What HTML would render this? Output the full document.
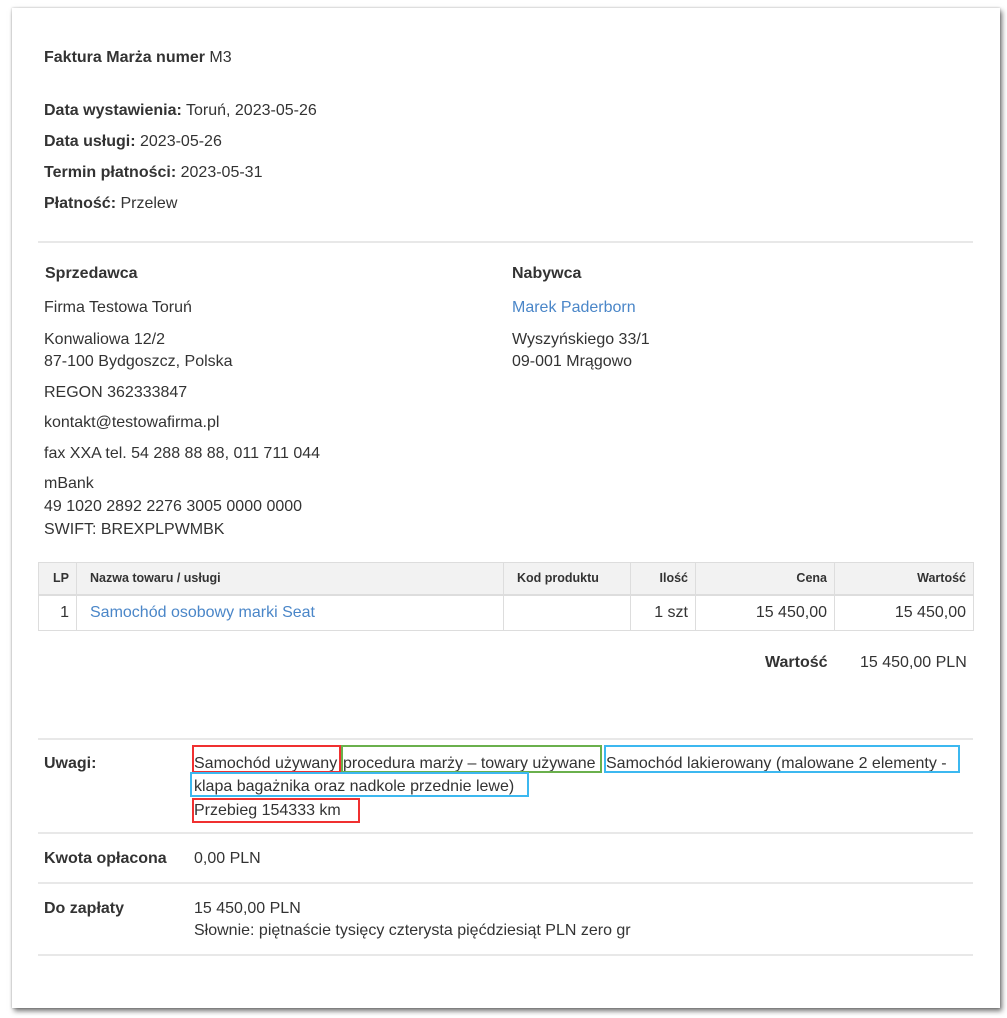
<!DOCTYPE html>
<html><head><meta charset="utf-8"><style>
*{margin:0;padding:0;box-sizing:border-box}
body{width:1007px;height:1018px;background:#fff;font-family:"Liberation Sans",Arial,sans-serif;color:#333;font-size:16px;position:relative;overflow:hidden}
.page{position:absolute;left:12px;top:8px;width:988px;height:1000px;background:#fff;box-shadow:2px 3px 5px rgba(0,0,0,.55),0 0 2px rgba(0,0,0,.25)}
.t{position:absolute;line-height:18px;white-space:nowrap;margin-top:1px}
b{font-weight:bold}
.a{color:#4a86c8}
.hr{position:absolute;left:38px;width:935px;height:2px;background:#e8e8e8}
table{position:absolute;left:38px;top:562px;width:936px;border-collapse:collapse}
td,th{border:1px solid #ddd;padding:0 7px;white-space:nowrap}
th{background:#f2f2f2;font-size:12.5px;height:32px;font-weight:bold;color:#333;border-bottom:2px solid #ddd}
td{height:36px;font-size:16px}
.r{text-align:right}.l{text-align:left}
.bx{position:absolute;border:2px solid}
</style></head><body>
<div class="page"></div>
<div class="t" style="left:44px;top:48px"><b>Faktura Marża numer</b> M3</div>
<div class="t" style="left:44px;top:101px"><b>Data wystawienia:</b> Toruń, 2023-05-26</div>
<div class="t" style="left:44px;top:132px"><b>Data usługi:</b> 2023-05-26</div>
<div class="t" style="left:44px;top:163px"><b>Termin płatności:</b> 2023-05-31</div>
<div class="t" style="left:44px;top:194px"><b>Płatność:</b> Przelew</div>
<div class="hr" style="top:241px"></div>

<div class="t" style="left:45px;top:264px"><b>Sprzedawca</b></div>
<div class="t" style="left:44px;top:298px">Firma Testowa Toruń</div>
<div class="t" style="left:44px;top:330px">Konwaliowa 12/2</div>
<div class="t" style="left:44px;top:352px">87-100 Bydgoszcz, Polska</div>
<div class="t" style="left:44px;top:383px">REGON 362333847</div>
<div class="t" style="left:44px;top:413px">kontakt@testowafirma.pl</div>
<div class="t" style="left:44px;top:444px">fax XXA tel. 54 288 88 88, 011 711 044</div>
<div class="t" style="left:44px;top:474px">mBank</div>
<div class="t" style="left:44px;top:497px">49 1020 2892 2276 3005 0000 0000</div>
<div class="t" style="left:44px;top:520px">SWIFT: BREXPLPWMBK</div>

<div class="t" style="left:512px;top:264px"><b>Nabywca</b></div>
<div class="t a" style="left:512px;top:298px">Marek Paderborn</div>
<div class="t" style="left:512px;top:330px">Wyszyńskiego 33/1</div>
<div class="t" style="left:512px;top:352px">09-001 Mrągowo</div>

<table>
<tr><th class="r" style="width:38px">LP</th><th class="l" style="width:427px;padding-left:13px">Nazwa towaru / usługi</th><th class="l" style="width:127px;padding-left:13px">Kod produktu</th><th class="r" style="width:65px">Ilość</th><th class="r" style="width:139px">Cena</th><th class="r">Wartość</th></tr>
<tr><td class="r">1</td><td class="a" style="padding-left:13px">Samochód osobowy marki Seat</td><td></td><td class="r">1 szt</td><td class="r">15 450,00</td><td class="r">15 450,00</td></tr>
</table>

<div class="t" style="left:765px;top:653px"><b>Wartość</b></div>
<div class="t" style="left:860px;top:653px">15 450,00 PLN</div>

<div class="hr" style="top:738px"></div>
<div class="t" style="left:44px;top:754px"><b>Uwagi:</b></div>
<div class="t" style="left:194px;top:754px">Samochód używany</div>
<div class="t" style="left:343px;top:754px">procedura marży – towary używane</div>
<div class="t" style="left:606px;top:754px">Samochód lakierowany (malowane 2 elementy -</div>
<div class="t" style="left:194px;top:777px">klapa bagażnika oraz nadkole przednie lewe)</div>
<div class="t" style="left:194px;top:801px">Przebieg 154333 km</div>
<div class="bx" style="left:192px;top:745px;width:149px;height:28px;border-color:#f03030"></div>
<div class="bx" style="left:341px;top:745px;width:261px;height:28px;border-color:#6ab04c"></div>
<div class="bx" style="left:604px;top:745px;width:356px;height:28px;border-color:#3cb8f0"></div>
<div class="bx" style="left:190px;top:772px;width:339px;height:25px;border-color:#3cb8f0"></div>
<div class="bx" style="left:192px;top:798px;width:168px;height:25px;border-color:#f03030"></div>

<div class="hr" style="top:832px"></div>
<div class="t" style="left:44px;top:849px"><b>Kwota opłacona</b></div>
<div class="t" style="left:194px;top:849px">0,00 PLN</div>
<div class="hr" style="top:882px"></div>
<div class="t" style="left:44px;top:899px"><b>Do zapłaty</b></div>
<div class="t" style="left:194px;top:899px">15 450,00 PLN</div>
<div class="t" style="left:194px;top:921px">Słownie: piętnaście tysięcy czterysta pięćdziesiąt PLN zero gr</div>
<div class="hr" style="top:954px"></div>
</body></html>
